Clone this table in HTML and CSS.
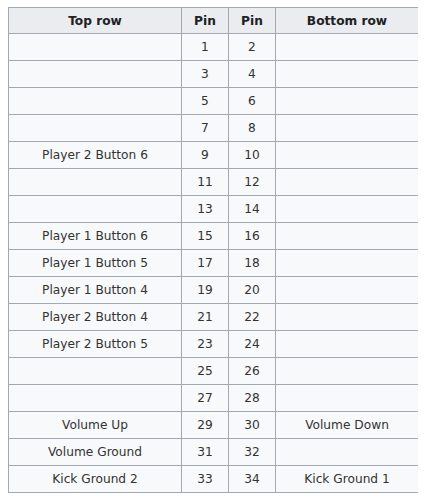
FILE: index.html
```html
<!DOCTYPE html>
<html>
<head>
<meta charset="utf-8">
<link rel="stylesheet" href="styles.css">
</head>
<body>
<table class="pins">
<colgroup><col class="c-top"><col class="c-pin"><col class="c-pin"><col class="c-bot"></colgroup>
<thead>
<tr><th>Top row</th><th>Pin</th><th>Pin</th><th>Bottom row</th></tr>
</thead>
<tbody>
<tr><td></td><td>1</td><td>2</td><td></td></tr>
<tr><td></td><td>3</td><td>4</td><td></td></tr>
<tr><td></td><td>5</td><td>6</td><td></td></tr>
<tr><td></td><td>7</td><td>8</td><td></td></tr>
<tr><td>Player 2 Button 6</td><td>9</td><td>10</td><td></td></tr>
<tr><td></td><td>11</td><td>12</td><td></td></tr>
<tr><td></td><td>13</td><td>14</td><td></td></tr>
<tr><td>Player 1 Button 6</td><td>15</td><td>16</td><td></td></tr>
<tr><td>Player 1 Button 5</td><td>17</td><td>18</td><td></td></tr>
<tr><td>Player 1 Button 4</td><td>19</td><td>20</td><td></td></tr>
<tr><td>Player 2 Button 4</td><td>21</td><td>22</td><td></td></tr>
<tr><td>Player 2 Button 5</td><td>23</td><td>24</td><td></td></tr>
<tr><td></td><td>25</td><td>26</td><td></td></tr>
<tr><td></td><td>27</td><td>28</td><td></td></tr>
<tr><td>Volume Up</td><td>29</td><td>30</td><td>Volume Down</td></tr>
<tr><td>Volume Ground</td><td>31</td><td>32</td><td></td></tr>
<tr><td>Kick Ground 2</td><td>33</td><td>34</td><td>Kick Ground 1</td></tr>
</tbody>
</table>
</body>
</html>
```
FILE: styles.css
```css
html, body {
  background: #ffffff;
}
body {
  margin: 7px 8px;
  font-family: "DejaVu Sans", Verdana, sans-serif;
  font-size: 12.2px;
  color: #333333;
}
.pins {
  border-collapse: collapse;
  table-layout: fixed;
  width: 411px;
  background: #f8f9fa;
  border: 1px solid #a2a9b1;
}
.c-top { width: 173px; }
.c-pin { width: 47px; }
.c-bot { width: 143px; }
.pins th, .pins td {
  border: 1px solid #a2a9b1;
  padding: 0 4px;
  height: 26px;
  text-align: center;
  vertical-align: middle;
  white-space: nowrap;
}
.pins th {
  height: 25px;
  background: #eaecf0;
  font-weight: bold;
  color: #202122;
}
```
